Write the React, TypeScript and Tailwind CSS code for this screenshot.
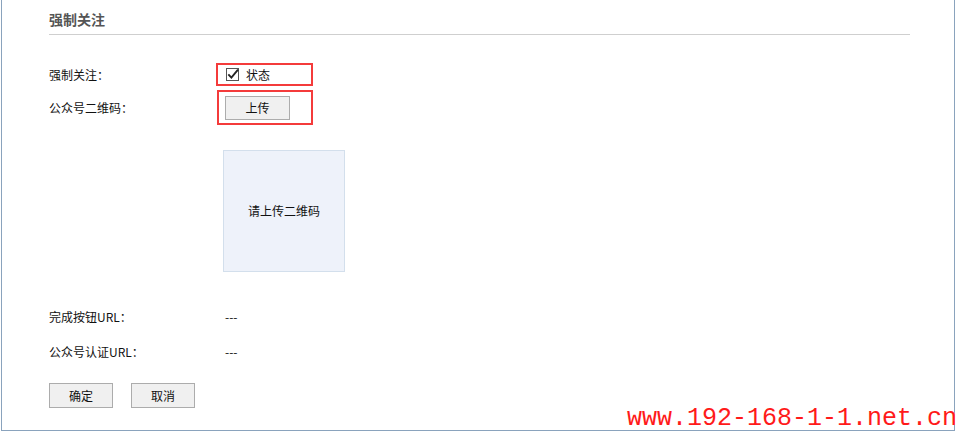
import { useState } from 'react';

const labelFont = { fontFamily: '"Microsoft YaHei", "Noto Sans CJK SC", sans-serif' };

export default function App() {
  const [followOn, setFollowOn] = useState<boolean>(true);

  return (
    <div className="relative w-[959px] h-[434px] bg-white text-[12px] text-[#111]" style={labelFont}>
      <div className="ml-px w-[954px] h-[431px] border-l border-r border-b border-[#8aa3bd] pl-[47px] pr-[44px]">
        <div className="pt-[8px] pb-[4px] text-[14px] font-bold text-[#555] border-b border-[#cfcfcf] leading-[22px]">
          强制关注
        </div>

        <div className="mt-[28px] flex items-center h-[23px]">
          <div className="w-[167px]">强制关注：</div>
          <div className="w-[97px] h-[23px] border-2 border-[#f43b3b] flex items-center pl-[8px]">
            <button
              type="button"
              onClick={() => setFollowOn(!followOn)}
              className="w-[13px] h-[13px] border-[1.5px] border-[#555] bg-white flex items-center justify-center"
            >
              {followOn && (
                <svg width="11" height="11" viewBox="0 0 10 10" className="overflow-visible">
                  <path d="M1.2 4.8 L4 7.8 L10 0.5" fill="none" stroke="#222" strokeWidth="1.7" />
                </svg>
              )}
            </button>
            <span className="ml-[7px]">状态</span>
          </div>
        </div>

        <div className="mt-[4px] flex items-center h-[35px]">
          <div className="w-[168px]">公众号二维码：</div>
          <div className="w-[96px] h-[35px] border-2 border-[#f43b3b] flex items-center pl-[6px]">
            <button
              type="button"
              className="w-[65px] h-[24px] bg-[#f0f0f0] border border-[#acacac] text-[12px]"
            >
              上传
            </button>
          </div>
        </div>

        <div className="mt-[25px] ml-[174px] w-[122px] h-[122px] bg-[#eef2fa] border border-[#d3dfec] flex items-center justify-center">
          请上传二维码
        </div>

        <div className="mt-[35px] flex items-center h-[20px]">
          <div className="w-[176px]">完成按钮URL：</div>
          <div>---</div>
        </div>

        <div className="mt-[15px] flex items-center h-[20px]">
          <div className="w-[176px]">公众号认证URL：</div>
          <div>---</div>
        </div>

        <div className="mt-[21px] flex gap-[18px]">
          <button type="button" className="w-[64px] h-[25px] bg-[#f0f0f0] border border-[#acacac]">
            确定
          </button>
          <button type="button" className="w-[64px] h-[25px] bg-[#f0f0f0] border border-[#acacac]">
            取消
          </button>
        </div>
      </div>

      <div
        className="absolute left-[627px] top-[406px] text-[25px] leading-[26px] text-[#ff1a1a] whitespace-nowrap"
        style={{ fontFamily: '"Liberation Mono", monospace' }}
      >
        www.192-168-1-1.net.cn
      </div>
    </div>
  );
}
